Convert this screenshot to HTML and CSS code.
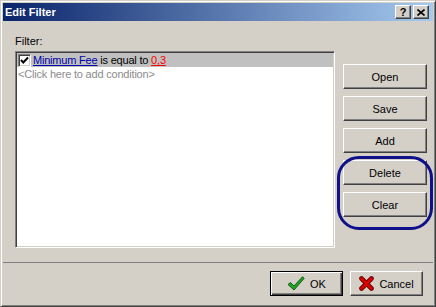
FILE: index.html
```html
<!DOCTYPE html>
<html lang="en">
<head>
    <meta charset="UTF-8">
    <title>Edit Filter</title>
    <link rel="stylesheet" href="styles.css">
</head>
<body>
    <div class="window">
        <div class="titlebar">
            <span class="title">Edit Filter</span>
            <div class="caption-buttons">
                <span class="cap-btn help">?</span>
                <span class="cap-btn close">
                    <svg width="8" height="7" viewBox="0 0 8 7">
                        <path d="M0.5 0.5 L7.5 6.5 M7.5 0.5 L0.5 6.5" stroke="#000" stroke-width="1.6" fill="none"/>
                    </svg>
                </span>
            </div>
        </div>
        <div class="client">
            <div class="main">
                <div class="filter-col">
                    <div class="label">Filter:</div>
                    <div class="listbox">
                        <div class="row selected">
                            <span class="checkbox">
                                <svg width="9" height="9" viewBox="0 0 9 9">
                                    <path d="M1 4 L3.3 6.5 L8 1.5" stroke="#000" stroke-width="2" fill="none"/>
                                </svg>
                            </span>
                            <span class="field">Minimum Fee</span>&nbsp;is equal to&nbsp;<span class="value">0,3</span>
                        </div>
                        <div class="row hint">&lt;Click here to add condition&gt;</div>
                    </div>
                </div>
                <div class="side-buttons">
                    <button class="btn">Open</button>
                    <button class="btn">Save</button>
                    <button class="btn">Add</button>
                    <div class="marked">
                        <button class="btn">Delete</button>
                        <button class="btn">Clear</button>
                        <span class="ring"></span>
                    </div>
                </div>
            </div>
            <div class="separator"></div>
            <div class="footer">
                <button class="btn dlg default">
                    <svg width="18" height="15" viewBox="0 0 18 15">
                        <path d="M1 8.5 L3.5 6.5 L7 10 L15.5 0.8 L17.2 2.3 L7 14 Z" fill="#1fa51f" stroke="#0b4f0b" stroke-width="0.9" stroke-linejoin="round"/>
                    </svg>
                    <span>OK</span>
                </button>
                <button class="btn dlg">
                    <svg width="15" height="15" viewBox="0 0 15 15">
                        <path d="M2.5 2.5 L12.5 12.5 M12.5 2.5 L2.5 12.5" stroke="#6a0000" stroke-width="4.6" stroke-linecap="round"/>
                        <path d="M2.5 2.5 L12.5 12.5 M12.5 2.5 L2.5 12.5" stroke="#d80000" stroke-width="2.8" stroke-linecap="round"/>
                    </svg>
                    <span>Cancel</span>
                </button>
            </div>
        </div>
    </div>
</body>
</html>
```

FILE: styles.css
```css
body{
    margin: 0;
    background: #d4d0c8;
    font-family: "Liberation Sans", Arial, sans-serif;
    font-size: 11px;
}
.window{
    width: 436px;
    height: 307px;
    box-sizing: border-box;
    border: 1px solid;
    border-color: #d4d0c8 #404040 #404040 #d4d0c8;
    box-shadow: inset 1px 1px #fff, inset -1px -1px #808080;
    padding: 2px;
    display: flex;
    flex-direction: column;
}
.titlebar{
    height: 18px;
    margin-bottom: 1px;
    background: linear-gradient(to right, #0a246a, #a6caf0);
    display: flex;
    align-items: center;
    justify-content: space-between;
    padding: 0 4px 0 2px;
}
.title{
    color: #fff;
    font-weight: bold;
    line-height: 13px;
    padding-top: 1px;
}
.caption-buttons{
    display: flex;
    gap: 2px;
}
.cap-btn{
    width: 16px;
    height: 14px;
    box-sizing: border-box;
    background: #d4d0c8;
    border: 1px solid;
    border-color: #fff #404040 #404040 #fff;
    box-shadow: inset -1px -1px #808080;
    display: flex;
    align-items: center;
    justify-content: center;
    font-weight: bold;
    font-size: 11px;
    line-height: 12px;
}
.client{
    flex: 1;
    display: flex;
    flex-direction: column;
}
.main{
    display: flex;
    gap: 8px;
    padding: 13px 0 0 12px;
}
.label{
    line-height: 13px;
    margin-bottom: 3px;
}
.listbox{
    width: 320px;
    height: 197px;
    box-sizing: border-box;
    background: #fff;
    border: 1px solid;
    border-color: #808080 #fff #fff #808080;
    box-shadow: inset 1px 1px #404040, inset -1px -1px #d4d0c8;
    padding: 1px;
}
.row{
    height: 14px;
    line-height: 14px;
    display: flex;
    align-items: center;
    padding-left: 1px;
    white-space: nowrap;
    letter-spacing: -0.2px;
}
.row.selected{
    background: #c0c0c0;
}
.row.hint{
    color: #8c8c8c;
}
.checkbox{
    width: 13px;
    height: 13px;
    box-sizing: border-box;
    background: #fff;
    border: 1px solid;
    border-color: #808080 #fff #fff #808080;
    box-shadow: inset 1px 1px #404040, inset -1px -1px #d4d0c8;
    display: flex;
    align-items: center;
    justify-content: center;
    margin-right: 2px;
}
.field{
    color: #0000a8;
    text-decoration: underline;
}
.value{
    color: #ff0000;
    text-decoration: underline;
}
.side-buttons{
    display: flex;
    flex-direction: column;
    gap: 7px;
    padding-top: 29px;
}
.marked{
    position: relative;
    display: flex;
    flex-direction: column;
    gap: 7px;
}
.ring{
    position: absolute;
    top: -4px;
    bottom: -13px;
    left: -6px;
    right: -6px;
    border: 3px solid #10108a;
    border-radius: 22px;
    pointer-events: none;
}
.btn{
    width: 84px;
    height: 25px;
    box-sizing: border-box;
    background: #d4d0c8;
    border: 1px solid;
    border-color: #fff #404040 #404040 #fff;
    box-shadow: inset -1px -1px #808080;
    font-family: "Liberation Sans", Arial, sans-serif;
    font-size: 11px;
    color: #000;
    padding: 0;
}
.separator{
    height: 1px;
    background: #808080;
    margin-top: 14px;
}
.footer{
    display: flex;
    justify-content: flex-end;
    gap: 7px;
    padding: 8px 10px 0 0;
}
.btn.dlg{
    width: 73px;
    display: flex;
    align-items: center;
    justify-content: center;
    gap: 5px;
}
.btn.default{
    border: 1px solid #000;
    box-shadow: inset 1px 1px #fff, inset -1px -1px #404040, inset -2px -2px #808080;
}
```
